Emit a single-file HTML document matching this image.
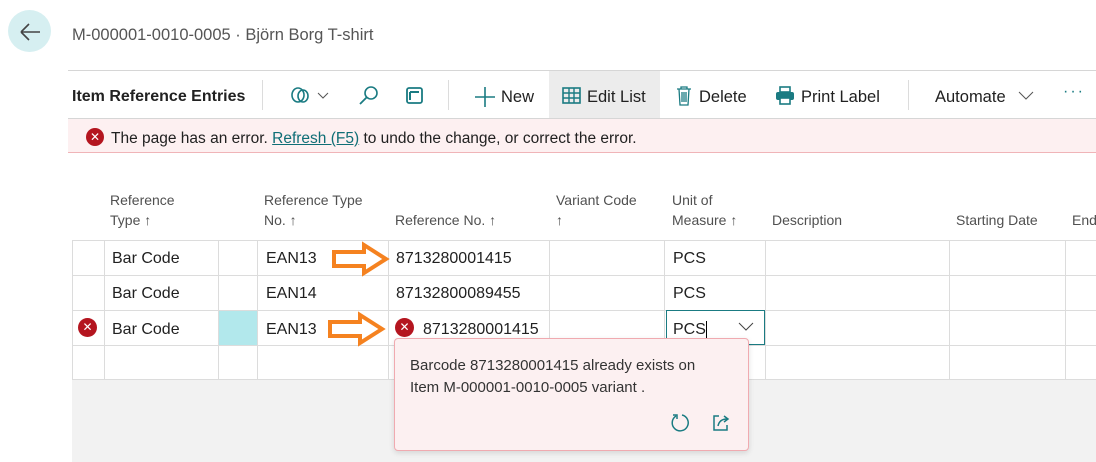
<!DOCTYPE html>
<html><head><style>
*{margin:0;padding:0;box-sizing:border-box}
body{width:1096px;height:462px;background:#fff;font-family:"Liberation Sans",sans-serif;color:#212121;position:relative;overflow:hidden}
.a{position:absolute;white-space:nowrap}
.v{position:absolute;background:#dcdcdc;width:1px}
.h{position:absolute;background:#dcdcdc;height:1px}
.hd{position:absolute;font-size:14px;color:#505050;line-height:20px}
.c{position:absolute;font-size:16px;line-height:20px}
.tb{position:absolute;white-space:nowrap;font-size:16.5px;top:88px}
</style></head><body>
<div class="a" style="left:8px;top:10px;width:43px;height:42px;border-radius:50%;background:#d6eff1"></div>
<svg class="a" style="left:18px;top:22px" width="24" height="20"><path d="M3 10H22M3 10L11 2M3 10L11 18" stroke="#444" stroke-width="1.6" fill="none"/></svg>
<div class="a" style="left:72px;top:26px;font-size:16.5px;color:#555">M-000001-0010-0005 · Björn Borg T-shirt</div>

<div class="h" style="left:68px;right:0;top:70px;background:#d6d6d6"></div>
<div class="tb" style="left:72px;font-weight:bold;font-size:16px">Item Reference Entries</div>
<div class="v" style="left:262px;top:80px;height:30px"></div>
<svg class="a" style="left:290px;top:85px" width="45" height="22"><ellipse cx="8" cy="10" rx="6" ry="7" fill="none" stroke="#1a7b82" stroke-width="1.6"/><ellipse cx="13" cy="11" rx="5" ry="6" fill="none" stroke="#1a7b82" stroke-width="1.6"/><path d="M28 8l5 5 5-5" stroke="#555" fill="none"/></svg>
<svg class="a" style="left:358px;top:85px" width="22" height="22"><circle cx="13" cy="8" r="6" fill="none" stroke="#1a7b82" stroke-width="1.6"/><path d="M9 12L2 19" stroke="#1a7b82" stroke-width="1.8"/></svg>
<svg class="a" style="left:404px;top:85px" width="22" height="22"><rect x="3" y="3" width="15" height="15" rx="2" fill="none" stroke="#1a7b82" stroke-width="1.8"/><path d="M6 7h9M6 7v8" stroke="#1a7b82" stroke-width="2"/></svg>
<div class="v" style="left:448px;top:80px;height:30px"></div>
<svg class="a" style="left:474px;top:86px" width="22" height="22"><path d="M11 1v20M1 11h20" stroke="#1a7b82" stroke-width="1.6"/></svg>
<div class="tb" style="left:501px">New</div>
<div class="a" style="left:549px;top:71px;width:111px;height:47px;background:#ececec"></div>
<svg class="a" style="left:562px;top:87px" width="20" height="18"><rect x="1" y="1" width="17" height="15" fill="none" stroke="#1a7b82" stroke-width="1.6"/><path d="M1 6h17M1 11h17M7 1v15M12 1v15" stroke="#1a7b82" stroke-width="1.4"/></svg>
<div class="tb" style="left:587px">Edit List</div>
<svg class="a" style="left:675px;top:85px" width="18" height="22"><path d="M2 4h14M6 4V2h6v2M4 4l1 16h8l1-16M7 7v10M9 7v10M11 7v10" stroke="#1a7b82" stroke-width="1.3" fill="none"/></svg>
<div class="tb" style="left:699px">Delete</div>
<svg class="a" style="left:775px;top:86px" width="20" height="20"><rect x="5" y="1" width="10" height="5" fill="none" stroke="#1a7b82" stroke-width="1.6"/><rect x="1" y="6" width="18" height="8" rx="2" fill="#1a7b82"/><rect x="5" y="12" width="10" height="6" fill="#fff" stroke="#1a7b82" stroke-width="1.6"/></svg>
<div class="tb" style="left:801px">Print Label</div>
<div class="v" style="left:908px;top:80px;height:30px"></div>
<div class="tb" style="left:935px">Automate</div>
<svg class="a" style="left:1018px;top:91px" width="16" height="10"><path d="M1 1l7 7 7-7" stroke="#555" fill="none"/></svg>
<div class="a" style="left:1063px;top:83px;font-size:16px;color:#1a7b82;letter-spacing:2px">···</div>

<div class="a" style="left:68px;right:0;top:118px;height:35px;background:#fdf0f1;border-top:1px solid #d6d6d6;border-bottom:1px solid #f0b4b8"></div>
<div class="a" style="left:86px;top:128px;width:18px;height:18px;border-radius:50%;background:#b4151f;color:#fff;font-size:12px;text-align:center;line-height:18px">✕</div>
<div class="a" style="left:111px;top:130px;font-size:15.5px">The page has an error. <span style="color:#0f6e76;text-decoration:underline">Refresh (F5)</span> to undo the change, or correct the error.</div>

<div class="hd" style="left:110px;top:190px">Reference<br>Type ↑</div>
<div class="hd" style="left:264px;top:190px">Reference Type<br>No. ↑</div>
<div class="hd" style="left:395px;top:210px">Reference No. ↑</div>
<div class="hd" style="left:556px;top:190px">Variant Code<br>↑</div>
<div class="hd" style="left:672px;top:190px">Unit of<br>Measure ↑</div>
<div class="hd" style="left:772px;top:210px">Description</div>
<div class="hd" style="left:956px;top:210px">Starting Date</div>
<div class="hd" style="left:1072px;top:210px">End</div>

<div class="a" style="left:72px;top:379px;right:0;bottom:0;background:#f2f2f2"></div>
<div class="a" style="left:218px;top:310px;width:39px;height:35px;background:#b2e8ec"></div>
<div class="h" style="left:72px;right:0;top:240px"></div>
<div class="h" style="left:72px;right:0;top:275px"></div>
<div class="h" style="left:72px;right:0;top:310px"></div>
<div class="h" style="left:72px;right:0;top:345px"></div>
<div class="h" style="left:72px;right:0;top:379px"></div>
<div class="v" style="left:72px;top:240px;height:140px"></div>
<div class="v" style="left:104px;top:240px;height:140px"></div>
<div class="v" style="left:218px;top:240px;height:140px"></div>
<div class="v" style="left:257px;top:240px;height:140px"></div>
<div class="v" style="left:388px;top:240px;height:140px"></div>
<div class="v" style="left:549px;top:240px;height:140px"></div>
<div class="v" style="left:664px;top:240px;height:140px"></div>
<div class="v" style="left:765px;top:240px;height:140px"></div>
<div class="v" style="left:949px;top:240px;height:140px"></div>
<div class="v" style="left:1065px;top:240px;height:140px"></div>

<div class="c" style="left:112px;top:249px">Bar Code</div>
<div class="c" style="left:266px;top:249px">EAN13</div>
<div class="c" style="left:396px;top:249px">8713280001415</div>
<div class="c" style="left:673px;top:249px">PCS</div>
<div class="c" style="left:112px;top:284px">Bar Code</div>
<div class="c" style="left:266px;top:284px">EAN14</div>
<div class="c" style="left:396px;top:284px">87132800089455</div>
<div class="c" style="left:673px;top:284px">PCS</div>
<div class="a" style="left:78px;top:318px;width:19px;height:19px;border-radius:50%;background:#b4151f;color:#fff;font-size:12px;text-align:center;line-height:19px">✕</div>
<div class="c" style="left:112px;top:320px">Bar Code</div>
<div class="c" style="left:266px;top:320px">EAN13</div>
<div class="a" style="left:395px;top:318px;width:19px;height:19px;border-radius:50%;background:#b4151f;color:#fff;font-size:12px;text-align:center;line-height:19px">✕</div>
<div class="c" style="left:423px;top:320px">8713280001415</div>
<div class="a" style="left:666px;top:310px;width:99px;height:35px;border:1.5px solid #1a7b82;background:#fff"></div>
<div class="c" style="left:673px;top:320px">PCS<span style="border-right:1px solid #000"></span></div>
<svg class="a" style="left:738px;top:322px" width="16" height="10"><path d="M1 1l7 7 7-7" stroke="#444" fill="none"/></svg>

<svg class="a" style="left:330px;top:241px" width="62" height="36"><path d="M4 11H34V4L56 18L34 32V25H4Z" fill="none" stroke="#f58220" stroke-width="4"/></svg>
<svg class="a" style="left:326px;top:311px" width="62" height="36"><path d="M4 11H34V4L56 18L34 32V25H4Z" fill="none" stroke="#f58220" stroke-width="4"/></svg>

<div class="a" style="left:394px;top:338px;width:355px;height:113px;background:#fcf0f1;border:1px solid #f0aab0;border-radius:4px;box-shadow:0 2px 6px rgba(0,0,0,.12)"></div>
<div class="a" style="left:410px;top:355px;font-size:15px;line-height:22px;color:#333">Barcode 8713280001415 already exists on<br>Item M-000001-0010-0005 variant .</div>
<svg class="a" style="left:670px;top:413px" width="20" height="20"><path d="M6 3A8 8 0 1 0 12 2" fill="none" stroke="#1a7b82" stroke-width="1.5"/><path d="M3 2h4v4" fill="none" stroke="#1a7b82" stroke-width="1.5"/></svg>
<svg class="a" style="left:711px;top:413px" width="20" height="20"><path d="M8 3H3v14h13v-5" fill="none" stroke="#1a7b82" stroke-width="1.5"/><path d="M7 13c1-5 4-7 9-7M13 3l4 3-4 3" fill="none" stroke="#1a7b82" stroke-width="1.5"/></svg>
</body></html>
